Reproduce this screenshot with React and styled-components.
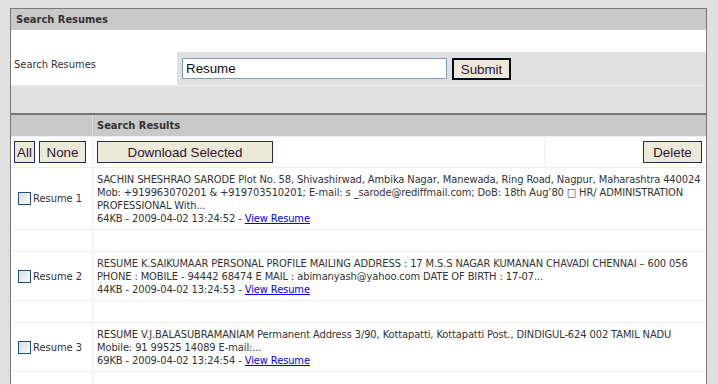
import React from 'react';
import styled, { createGlobalStyle } from 'styled-components';

const GlobalStyle = createGlobalStyle`
  body {
    margin: 0;
    background: #e0e0e0;
    font-family: "DejaVu Sans Condensed", "DejaVu Sans", sans-serif;
    font-stretch: condensed;
    font-size: 11px;
    color: #333;
  }
`;

const Page = styled.div`
  padding: 8px 0 0 10px;
`;

const Panel = styled.div`
  width: 697px;
  box-sizing: border-box;
  border: 1px solid #777;
  border-bottom: none;
  background: #fff;
`;

const Header = styled.div`
  height: 21px;
  line-height: 21px;
  background: #c9c9c9;
  font-weight: bold;
  padding-left: 5px;
`;

const BlankRow = styled.div`
  height: ${props => props.h}px;
  background: ${props => props.grey ? '#e0e0e0' : '#fff'};
  border-top: ${props => props.grey ? '1px solid #ececec' : 'none'};
  box-sizing: border-box;
`;

const FormRow = styled.div`
  display: flex;
  height: 33px;
`;

const LabelCell = styled.div`
  width: 166px;
  padding: 6px 3px;
  box-sizing: border-box;
  background: #fff;
`;

const FieldCell = styled.div`
  flex: 1;
  background: #e0e0e0;
  display: flex;
  align-items: flex-start;
  gap: 5px;
  padding: 6px 0 0 5px;
`;

const SearchInput = styled.input`
  width: 265px;
  height: 21px;
  box-sizing: border-box;
  border: 1px solid #7f9db9;
  padding: 0 3px;
  font-family: Arial, "Liberation Sans", sans-serif;
  font-stretch: normal;
  font-size: 13.33px;
  color: #111;
  background: #fff;
  outline: none;
`;

const Button = styled.button`
  height: 22px;
  width: ${props => props.w}px;
  box-sizing: border-box;
  background: #ece9d8;
  border: ${props => props.strong ? '2px solid #0a0a1e' : '1px solid #1c2d5c'};
  border-radius: 0;
  padding: 0;
  font-family: Arial, "Liberation Sans", sans-serif;
  font-stretch: normal;
  font-size: 13.33px;
  color: #331133;
`;

const Divider = styled.div`
  height: 2px;
  background: #777;
`;

const Row = styled.div`
  display: grid;
  grid-template-columns: ${props => props.cols || '82px 1fr'};
  border-bottom: 1px solid #eeeeee;
  background: ${props => props.head ? '#c9c9c9' : '#fff'};
`;

const Cell = styled.div`
  border-right: ${props => props.last ? 'none' : `1px solid ${props.head ? '#dedede' : '#eeeeee'}`};
  padding: ${props => props.pad || '0 4px'};
  display: flex;
  align-items: ${props => props.top ? 'flex-start' : 'center'};
  justify-content: ${props => props.right ? 'flex-end' : 'flex-start'};
  gap: 4px;
  min-height: ${props => props.minH || 0}px;
`;

const HeadTitle = styled.div`
  font-weight: bold;
  height: 21px;
  line-height: 21px;
`;

const Check = styled.input`
  appearance: none;
  width: 13px;
  height: 13px;
  margin: 0 2px 0 3px;
  border: 1px solid #1c5180;
  background: linear-gradient(135deg, #dcdcd7, #fbfbf9);
`;

const Label = styled.label`
  display: flex;
  align-items: center;
`;

const Summary = styled.div`
  line-height: 13px;
  padding: 5px 0 4px;
  white-space: nowrap;
  letter-spacing: -0.1px;
`;

const ViewLink = styled.a`
  color: #0000ee;
  text-decoration: underline;
`;

const resumes = [
  {
    name: 'Resume 1',
    lines: [
      'SACHIN SHESHRAO SARODE Plot No. 58, Shivashirwad, Ambika Nagar, Manewada, Ring Road, Nagpur, Maharashtra 440024',
      'Mob: +919963070201 & +919703510201; E-mail: s _sarode@rediffmail.com; DoB: 18th Aug\u201980 \u25A1 HR/ ADMINISTRATION',
      'PROFESSIONAL With...',
    ],
    meta: '64KB - 2009-04-02 13:24:52 - ',
  },
  {
    name: 'Resume 2',
    lines: [
      'RESUME K.SAIKUMAAR PERSONAL PROFILE MAILING ADDRESS : 17 M.S.S NAGAR KUMANAN CHAVADI CHENNAI \u2013 600 056',
      'PHONE : MOBILE - 94442 68474 E MAIL : abimanyash@yahoo.com DATE OF BIRTH : 17-07...',
    ],
    meta: '44KB - 2009-04-02 13:24:53 - ',
  },
  {
    name: 'Resume 3',
    lines: [
      'RESUME V.J.BALASUBRAMANIAM Permanent Address 3/90, Kottapatti, Kottapatti Post., DINDIGUL-624 002 TAMIL NADU',
      'Mobile: 91 99525 14089 E-mail:...',
    ],
    meta: '69KB - 2009-04-02 13:24:54 - ',
  },
];

const App = () => {
  return (
    <Page>
      <GlobalStyle />
      <Panel>
        <Header>Search Resumes</Header>
        <BlankRow h={22} />
        <FormRow>
          <LabelCell>Search Resumes</LabelCell>
          <FieldCell>
            <SearchInput defaultValue="Resume" />
            <Button w={59} strong>Submit</Button>
          </FieldCell>
        </FormRow>
        <BlankRow h={28} grey />
        <Divider />

        <Row head>
          <Cell head />
          <Cell head last><HeadTitle>Search Results</HeadTitle></Cell>
        </Row>
        <Row cols="82px 452px 1fr">
          <Cell minH={30} pad="0 3px">
            <Button w={21}>All</Button>
            <Button w={47}>None</Button>
          </Cell>
          <Cell>
            <Button w={176}>Download Selected</Button>
          </Cell>
          <Cell last right>
            <Button w={59}>Delete</Button>
          </Cell>
        </Row>

        {resumes.map(r => (
          <React.Fragment key={r.name}>
            <Row>
              <Cell pad="0 4px">
                <Label>
                  <Check type="checkbox" />
                  {r.name}
                </Label>
              </Cell>
              <Cell last top>
                <Summary>
                  {r.lines.map(l => <div key={l}>{l}</div>)}
                  <div>{r.meta}<ViewLink href="#">View Resume</ViewLink></div>
                </Summary>
              </Cell>
            </Row>
            <Row>
              <Cell minH={21} />
              <Cell last />
            </Row>
          </React.Fragment>
        ))}
      </Panel>
    </Page>
  );
};

export default App;
